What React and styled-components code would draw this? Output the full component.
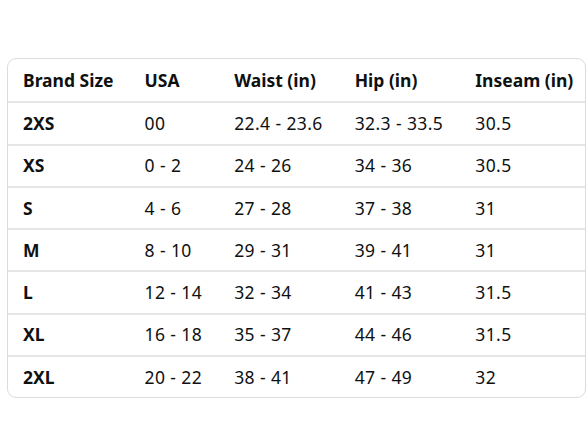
import styled, { createGlobalStyle } from 'styled-components';

const Global = createGlobalStyle`
    body{
        margin:0;
        background:#fff;
        font-family:"Noto Sans", "Open Sans", sans-serif;
        color:#0f1111;
    }
`;

const Page = styled.div`
    padding:58px 2px 0 7px;
`;

const Table = styled.table`
    width:579px;
    border:1.5px solid #dcdcdc;
    border-radius:9px;
    border-spacing:0;
    font-size:17.5px;
`;

const Cell = styled.td`
    height:42.3px;
    padding:0 0 1px 15px;
    width:${({w})=>w}px;
    font-weight:${({bold})=>bold?700:400};
    letter-spacing:${({bold})=>bold?'0':'0.4px'};
    text-align:left;
    border-top:${({first})=>first?'none':'2px solid #e6e6e6'};
    box-sizing:border-box;
    white-space:nowrap;
`;

const widths = [122, 90, 121, 121, 125];
const head = ['Brand Size','USA','Waist (in)','Hip (in)','Inseam (in)'];
const rows = [
    ['2XS','00','22.4 - 23.6','32.3 - 33.5','30.5'],
    ['XS','0 - 2','24 - 26','34 - 36','30.5'],
    ['S','4 - 6','27 - 28','37 - 38','31'],
    ['M','8 - 10','29 - 31','39 - 41','31'],
    ['L','12 - 14','32 - 34','41 - 43','31.5'],
    ['XL','16 - 18','35 - 37','44 - 46','31.5'],
    ['2XL','20 - 22','38 - 41','47 - 49','32'],
];

const App = ()=>{
    return (<>
        <Global/>
        <Page>
            <Table>
                <tbody>
                    <tr>
                        {head.map((h,i)=>(
                            <Cell as="th" key={`h_${i}`} w={widths[i]} bold first>{h}</Cell>
                        ))}
                    </tr>
                    {rows.map((r,idx)=>(
                        <tr key={`r_${idx}`}>
                            {r.map((c,i)=>(
                                <Cell key={`c_${i}`} w={widths[i]} bold={i===0}>{c}</Cell>
                            ))}
                        </tr>
                    ))}
                </tbody>
            </Table>
        </Page>
    </>)
}

export default App;
